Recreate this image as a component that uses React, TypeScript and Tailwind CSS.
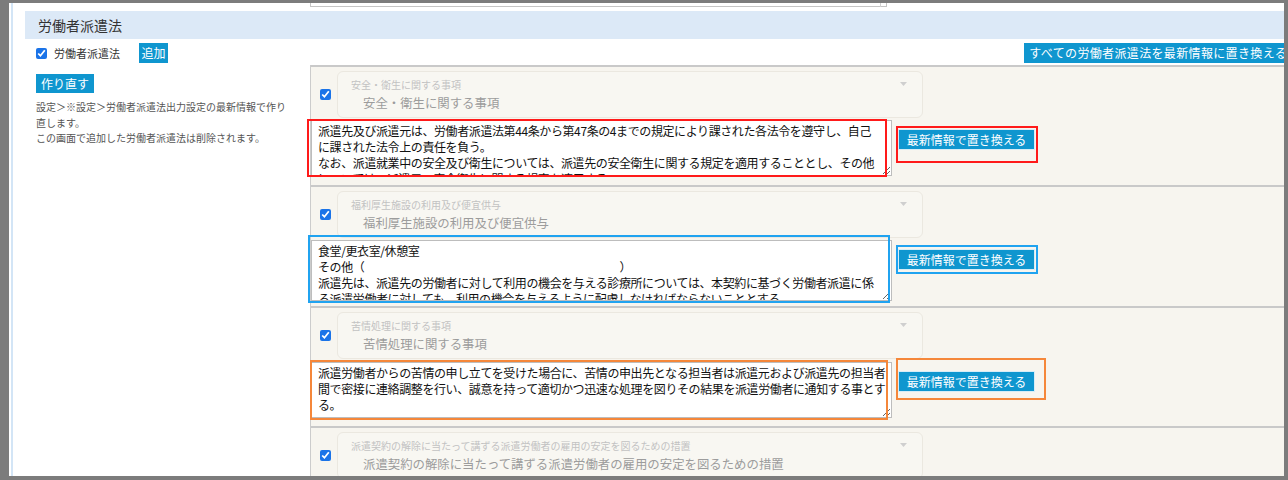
import React from "react";

type Card = {
  small: string;
  text?: string;
  cardClass: string;
  taClass?: string;
  taBoxClass?: string;
  btnClass?: string;
  btnBoxClass?: string;
};

const cards: Card[] = [
  {
    small: "安全・衛生に関する事項",
    text:
      "派遣先及び派遣元は、労働者派遣法第44条から第47条の4までの規定により課された各法令を遵守し、自己\nに課された法令上の責任を負う。\nなお、派遣就業中の安全及び衛生については、派遣先の安全衛生に関する規定を適用することとし、その他\nについては、派遣元の安全衛生に関する規定を適用する。",
    cardClass: "h-[120px]",
    taClass: "mt-[2px] h-[56px]",
    taBoxClass: "-left-[4px] -top-[1px] w-[580px] h-[58px] border-[#ff1a1a]",
    btnClass: "mt-[11px]",
    btnBoxClass: "-left-[2px] -top-[3px] w-[142px] h-[37px] border-[#ff1a1a]",
  },
  {
    small: "福利厚生施設の利用及び便宜供与",
    text:
      "食堂/更衣室/休憩室\nその他（" +
      "　".repeat(22) +
      "）\n派遣先は、派遣先の労働者に対して利用の機会を与える診療所については、本契約に基づく労働者派遣に係\nる派遣労働者に対しても、利用の機会を与えるように配慮しなければならないこととする。",
    cardClass: "h-[121px]",
    taClass: "mt-[2px] h-[61px]",
    taBoxClass: "-left-[3px] -top-[5px] w-[582px] h-[68px] border-[#20a3f0]",
    btnClass: "mt-[11px]",
    btnBoxClass: "-left-[2px] -top-[4px] w-[142px] h-[29px] border-[#20a3f0]",
  },
  {
    small: "苦情処理に関する事項",
    text:
      "派遣労働者からの苦情の申し立てを受けた場合に、苦情の申出先となる担当者は派遣元および派遣先の担当者\n間で密接に連絡調整を行い、誠意を持って適切かつ迅速な処理を図りその結果を派遣労働者に通知する事とす\nる。",
    cardClass: "h-[120px]",
    taClass: "mt-[3px] h-[56px]",
    taBoxClass: "-left-[1px] -top-[2px] w-[578px] h-[60px] border-[#f5873a]",
    btnClass: "mt-[12px]",
    btnBoxClass: "-left-[2px] -top-[13px] w-[150px] h-[42px] border-[#f5873a]",
  },
  {
    small: "派遣契約の解除に当たって講ずる派遣労働者の雇用の安定を図るための措置",
    cardClass: "h-[60px]",
  },
];

function BlueButton({ children, className = "" }: { children: React.ReactNode; className?: string }) {
  return (
    <button
      className={
        "bg-[#0f96cf] text-white leading-none flex items-center justify-center whitespace-nowrap " + className
      }
    >
      {children}
    </button>
  );
}

function CardRow({ c }: { c: Card }) {
  return (
    <div className={"border-t-2 border-[#c9c9c9] bg-[#f7f5ef] overflow-visible " + c.cardClass}>
      <div className="flex items-start pt-[4px]">
        <div className="w-[26px] pl-[9px] pt-[18px] flex">
          <input type="checkbox" defaultChecked className="w-[11px] h-[11px] m-0 accent-[#1a73e8]" />
        </div>
        <div className="relative w-[586px] h-[47px] border border-[#ebe8e0] rounded-[6px] bg-[#f8f7f2]">
          <div className="pt-[6px] pl-[13px] text-[10px] leading-[14px] text-[#c2c2c2] whitespace-nowrap">
            {c.small}
          </div>
          <div className="mt-[2px] pl-[25px] text-[12.4px] leading-[18px] text-[#9c9c9c] whitespace-nowrap">
            {c.small}
          </div>
          <svg className="absolute right-[15px] top-[10px]" width="7" height="4" viewBox="0 0 7 4">
            <path d="M0 0 L7 0 L3.5 4 Z" fill="#cfcfcf" />
          </svg>
        </div>
      </div>
      {c.text !== undefined && (
        <div className="flex items-start">
          <div className={"relative " + c.taClass}>
            <textarea
              wrap="off"
              defaultValue={c.text}
              className="block w-[581px] h-full bg-white border border-[#bdbdbd] pl-[6px] pt-[2px] text-[12px] leading-[16px] tracking-[-0.4px] text-[#111] whitespace-pre overflow-hidden outline-none"
            />
            <div className={"absolute border-2 pointer-events-none " + c.taBoxClass} />
          </div>
          <div className={"relative ml-[6px] " + c.btnClass}>
            <BlueButton className="w-[137px] h-[21px] text-[12px] border border-[#d7edf7]">
              最新情報で置き換える
            </BlueButton>
            <div className={"absolute border-2 pointer-events-none " + c.btnBoxClass} />
          </div>
        </div>
      )}
    </div>
  );
}

export default function App() {
  return (
    <div className="w-[1288px] h-[480px] bg-[#7c7c7c] pt-[3px] pl-[9px] pr-[4px] pb-[4px] font-['Noto_Sans_CJK_JP','Noto_Sans',sans-serif]">
      <div className="w-full h-full bg-white overflow-hidden flex">
        <div className="w-[2px] shrink-0" />
        <div className="w-[2px] shrink-0 bg-[#d3e5f6]" />
        <div className="flex-1 min-w-0 pl-[12px] flex flex-col">
          {/* remnant of previous textarea */}
          <div className="h-[8px] shrink-0">
            <div className="ml-[285px] w-[577px] h-[4px] bg-white border-x border-b border-[#c4c4c4] relative">
              <div className="absolute right-0 top-0 w-[6px] h-[4px] border-l border-[#d0d0d0]" />
            </div>
          </div>
          {/* heading */}
          <div className="h-[28px] shrink-0 bg-[#dce9f7] pl-[13px] flex items-center text-[14px] text-[#333] whitespace-nowrap">
            労働者派遣法
          </div>
          {/* body */}
          <div className="flex flex-1 min-h-0">
            <div className="w-[285px] shrink-0 pl-[11px] pt-[4px]">
              <div className="flex items-center h-[20px]">
                <input type="checkbox" defaultChecked className="w-[11px] h-[11px] m-0 accent-[#1a73e8]" />
                <span className="ml-[7px] text-[11px] text-[#333] whitespace-nowrap">労働者派遣法</span>
                <BlueButton className="ml-[19px] h-[20px] w-[29px] text-[12px]">追加</BlueButton>
              </div>
              <BlueButton className="mt-[11px] h-[19px] w-[58px] text-[12px]">作り直す</BlueButton>
              <div className="mt-[6px] w-[256px] text-[10px] leading-[15.5px] text-[#555]">
                <p>設定＞※設定＞労働者派遣法出力設定の最新情報で作り直します。</p>
                <p>この画面で追加した労働者派遣法は削除されます。</p>
              </div>
            </div>
            <div className="flex-1 min-w-0 flex flex-col">
              <div className="h-[26px] shrink-0 pt-[4px] flex justify-end">
                <BlueButton className="h-[20px] -mr-[10px] pl-[5px] pr-[7px] text-[12px] tracking-[0.35px]">
                  すべての労働者派遣法を最新情報に置き換える
                </BlueButton>
              </div>
              <div className="border-l border-[#cccccc] flex-1">
                {cards.map((c, i) => (
                  <CardRow key={i} c={c} />
                ))}
              </div>
            </div>
          </div>
        </div>
      </div>
    </div>
  );
}
